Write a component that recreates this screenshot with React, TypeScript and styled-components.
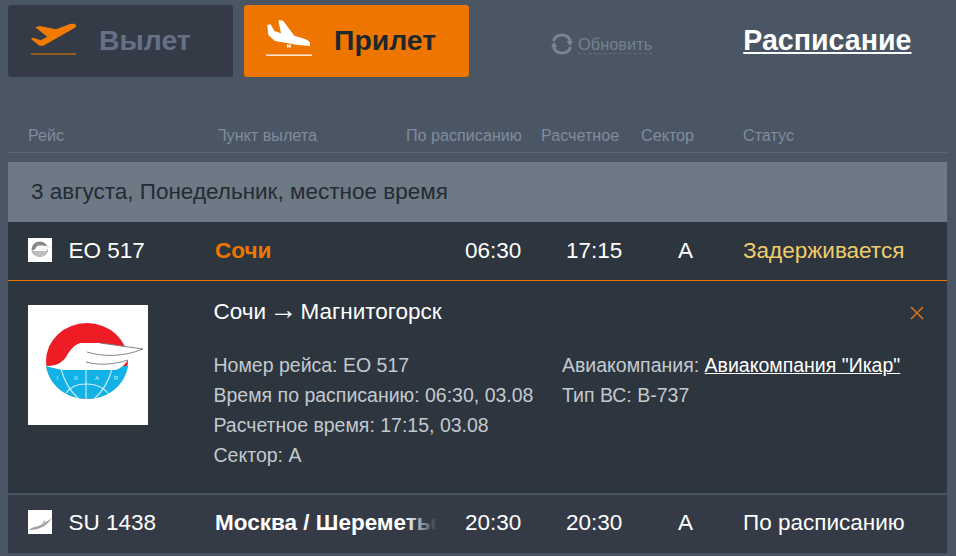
import React from "react";
import styled, { createGlobalStyle } from "styled-components";

const GlobalStyle = createGlobalStyle`
  html, body {
    margin: 0;
    padding: 0;
    height: 100%;
    overflow: hidden;
    background: #4a5663;
    font-family: "Liberation Sans", Arial, sans-serif;
  }
`;

const Page = styled.div`
  width: 956px;
  height: 556px;
  padding: 5px 9px 0 8px;
  box-sizing: border-box;
  background: #4a5663;
`;

const TopBar = styled.div`
  display: flex;
  align-items: flex-start;
  height: 72px;
`;

const TabButton = styled.a<{ $active?: boolean }>`
  display: flex;
  align-items: center;
  width: 225px;
  height: 72px;
  margin-right: 11px;
  box-sizing: border-box;
  padding-left: ${(p) => (p.$active ? "22px" : "23px")};
  border-radius: 3px;
  background: ${(p) => (p.$active ? "#ee7600" : "#343b46")};
  color: ${(p) => (p.$active ? "#1e262e" : "#667186")};
  font-size: 28.4px;
  font-weight: 700;

  svg {
    overflow: visible;
  }
`;

const TabLabel = styled.span`
  margin-left: 22px;
  padding-bottom: 2px;
`;

const Refresh = styled.a`
  display: flex;
  align-items: center;
  margin: 28px 0 0 71px;
  color: #76818f;
  font-size: 16.4px;
`;

const RefreshLabel = styled.span`
  align-self: flex-end;
  margin: 0 0 1px 5px;
  border-bottom: 1px dashed #5f6b79;
  line-height: 17px;
`;

const ScheduleLink = styled.a`
  margin: 17px 0 0 91px;
  color: #fff;
  font-size: 28.6px;
  font-weight: 700;
  text-decoration: underline;
  line-height: 36px;
`;

const HeadRow = styled.div`
  display: grid;
  grid-template-columns: 187px 191px 135px 100px 102px 1fr;
  margin-top: 48px;
  padding-left: 20px;
  height: 27px;
  border-bottom: 1px solid #5b6774;
  color: #808c9e;
  font-size: 16.15px;
  line-height: 21px;
`;

const HeadCell = styled.span<{ $clipped?: boolean }>`
  position: relative;

  &::before {
    content: "";
    display: ${(p) => (p.$clipped ? "block" : "none")};
    position: absolute;
    left: 0;
    top: 0;
    width: 3px;
    height: 24px;
    background: #4a5663;
  }
`;

const DateBand = styled.div`
  margin-top: 9px;
  height: 60px;
  padding-left: 23px;
  background: #6d7984;
  color: #232b33;
  font-size: 22.5px;
  line-height: 59px;
`;

const Flight = styled.div`
  display: flex;
  align-items: center;
`;

const LogoThumb = styled.div`
  display: flex;
  width: 24px;
  height: 24px;
  margin: 0 16.5px 2px 0;
  background: #fff;
  overflow: hidden;

  svg {
    filter: grayscale(1) blur(0.6px);
    opacity: 0.65;
  }
`;

const Row = styled.div<{ $open?: boolean }>`
  display: grid;
  grid-template-columns: 187px 250px 101px 112px 65px 1fr;
  align-items: center;
  height: 58px;
  padding-left: 20px;
  background: ${(p) => (p.$open ? "#2d353e" : "#343b46")};
  color: #fff;
  font-size: 22.5px;
`;

const OpenRow = styled(Row)`
  border-bottom: 1px solid #ee7600;
`;

const LastRow = styled(Row)`
  height: 56px;
  padding-bottom: 2px;
  border-bottom: 2px solid #46515e;
`;

const City = styled.div<{ $open?: boolean }>`
  position: relative;
  overflow: hidden;
  white-space: nowrap;
  width: 222px;
  font-weight: 700;
  color: ${(p) => (p.$open ? "#ee7600" : "#fff")};
`;

const CityFade = styled.span`
  position: absolute;
  top: 0;
  right: 0;
  bottom: 0;
  width: 32px;
  background: linear-gradient(to right, rgba(52, 59, 70, 0), #343b46);
`;

const Status = styled.div<{ $delayed?: boolean }>`
  color: ${(p) => (p.$delayed ? "#f0cd6b" : "#fff")};
`;

const Details = styled.div`
  position: relative;
  display: flex;
  height: 214px;
  box-sizing: border-box;
  padding: 18px 0 0 20px;
  background: #2d353e;
  color: #c3c9d0;
  font-size: 19.5px;
  border-bottom: 2px solid #4a5663;
`;

const LogoBox = styled.div`
  display: flex;
  flex: none;
  width: 120px;
  height: 120px;
  margin: 6px 65.5px 0 0;
  background: #fff;
`;

const DetailBody = styled.div`
  flex: 1;
`;

const RouteTitle = styled.div`
  color: #fff;
  font-size: 22.5px;
  line-height: 26px;
  margin-bottom: 25px;
`;

const RouteArrow = styled.span`
  font-size: 28px;
  line-height: 0;
  margin: 0 -3px;
`;

const Columns = styled.div`
  display: grid;
  grid-template-columns: 348.5px 1fr;
  line-height: 30px;
`;

const AirlineLink = styled.a`
  color: #fff;
  text-decoration: underline;
`;

const CloseIcon = styled.svg`
  position: absolute;
  top: 25px;
  right: 23px;
  width: 14px;
  height: 14px;
`;

const TakeoffIcon = () => (
  <svg width="46" height="36" viewBox="0 0 46 36">
    <path
      d="M4.3 4.3 L9 3 L25 6.3 L39 1 C42 0.4 44.5 1 45 2 C45.3 3 45 4 44 4.7 L12.3 22.7 L8.3 22.7 L0 16 L2.3 14.7 L9.7 17.3 L16.3 13.7 Z"
      fill="#f27a00"
    />
    <rect x="0" y="30.5" width="45" height="1" fill="#f27a00" />
  </svg>
);

const LandingIcon = () => (
  <svg width="46" height="36" viewBox="0 0 46 36">
    <path
      d="M1.3 2 L4.7 1.3 L8.3 8 L15 10.3 L12.3 -2.7 L15 -2.7 L17.3 -2 L28.3 12.7 L39 16 C42 17.2 44 19 44 20.3 L44 23 L32.3 22 L9 18 L2.3 12 Z"
      fill="#fff"
    />
    <rect x="21" y="21.5" width="1.6" height="3" fill="#fff" />
    <rect x="23.2" y="21.5" width="1.6" height="3" fill="#fff" />
    <rect x="0" y="31.5" width="46" height="1.3" fill="#fff" />
  </svg>
);

const RefreshIcon = () => (
  <svg width="22" height="22" viewBox="0 0 22 22" fill="none">
    <path d="M2.4 8 A9 9 0 0 1 19.4 8" stroke="#7a8590" strokeWidth="3" />
    <path d="M19.6 14 A9 9 0 0 1 2.6 14" stroke="#7a8590" strokeWidth="3" />
    <path d="M15.5 8 L22 8 L19 13 Z" fill="#7a8590" />
    <path d="M0 14 L6.5 14 L3 9 Z" fill="#7a8590" />
  </svg>
);

const IkarLogo = ({ size, letters }: { size: number; letters?: boolean }) => (
  <svg width={size} height={size} viewBox="0 0 120 120">
    <ellipse cx="59" cy="56" rx="41" ry="38" fill="#ee1c25" />
    <path d="M18 61 H100 C97 80 80 94 59 94 C38 94 21 80 18 61 Z" fill="#13b2e6" />
    <g fill="none" stroke="#cdeefa" strokeWidth="1.1">
      <path d="M58 62 V94" />
      <path d="M33 64 C36 75 42 86 50 93" />
      <path d="M84 64 C81 75 75 86 67 93" />
      <path d="M38 88 C46 76 70 76 80 88" />
    </g>
    {letters && (
      <g fill="#cdeefa" fontFamily="Liberation Sans, sans-serif" fontSize="6" textAnchor="middle">
        <text x="29" y="75">I</text>
        <text x="48" y="75">K</text>
        <text x="69" y="75">A</text>
        <text x="88" y="75">R</text>
      </g>
    )}
    <path
      d="M17.7 61 C27 61 33 59 38 52 C42 45 46 40 52 38 L72 38 L115 44 C112 50 106 54 100 55 C97 60 92 64 87 65 L35 65 C28 64 22 62 17.7 61 Z"
      fill="#fff"
    />
    <path
      d="M59 47 C75 52 95 52 115 44 M58 57 C72 61 88 59 100 55 M72 38 L115 44"
      fill="none"
      stroke="#777"
      strokeWidth="0.9"
    />
  </svg>
);

const ThumbPlane = () => (
  <svg width="24" height="24" viewBox="0 0 24 24">
    <path d="M1 20 C5 16 12 17 18 12 L24 8 L20 13 C14 19 6 20 1 20 Z" fill="#6e6e6e" />
    <path d="M12 16 L17 10 L18 14 Z" fill="#8a8a8a" />
  </svg>
);

export default function App() {
  return (
    <>
      <GlobalStyle />
      <Page>
        <TopBar>
          <TabButton>
            <TakeoffIcon />
            <TabLabel>Вылет</TabLabel>
          </TabButton>
          <TabButton $active>
            <LandingIcon />
            <TabLabel>Прилет</TabLabel>
          </TabButton>
          <Refresh>
            <RefreshIcon />
            <RefreshLabel>Обновить</RefreshLabel>
          </Refresh>
          <ScheduleLink>Расписание</ScheduleLink>
        </TopBar>
        <HeadRow>
          <HeadCell>Рейс</HeadCell>
          <HeadCell $clipped>Пункт вылета</HeadCell>
          <HeadCell>По расписанию</HeadCell>
          <HeadCell>Расчетное</HeadCell>
          <HeadCell>Сектор</HeadCell>
          <HeadCell>Статус</HeadCell>
        </HeadRow>
        <DateBand>3 августа, Понедельник, местное время</DateBand>
        <OpenRow $open>
          <Flight>
            <LogoThumb>
              <IkarLogo size={24} />
            </LogoThumb>
            EO 517
          </Flight>
          <City $open>Сочи</City>
          <span>06:30</span>
          <span>17:15</span>
          <span>A</span>
          <Status $delayed>Задерживается</Status>
        </OpenRow>
        <Details>
          <LogoBox>
            <IkarLogo size={120} letters />
          </LogoBox>
          <DetailBody>
            <RouteTitle>
              Сочи <RouteArrow>→</RouteArrow> Магнитогорск
            </RouteTitle>
            <Columns>
              <div>
                <div>Номер рейса: EO 517</div>
                <div>Время по расписанию: 06:30, 03.08</div>
                <div>Расчетное время: 17:15, 03.08</div>
                <div>Сектор: A</div>
              </div>
              <div>
                <div>
                  Авиакомпания: <AirlineLink>Авиакомпания "Икар"</AirlineLink>
                </div>
                <div>Тип ВС: B-737</div>
              </div>
            </Columns>
          </DetailBody>
          <CloseIcon viewBox="0 0 14 14">
            <path d="M1 1 L13 13 M13 1 L1 13" stroke="#d8761a" strokeWidth="1.5" />
          </CloseIcon>
        </Details>
        <LastRow>
          <Flight>
            <LogoThumb>
              <ThumbPlane />
            </LogoThumb>
            SU 1438
          </Flight>
          <City>
            Москва / Шереметьево
            <CityFade />
          </City>
          <span>20:30</span>
          <span>20:30</span>
          <span>A</span>
          <Status>По расписанию</Status>
        </LastRow>
      </Page>
    </>
  );
}
